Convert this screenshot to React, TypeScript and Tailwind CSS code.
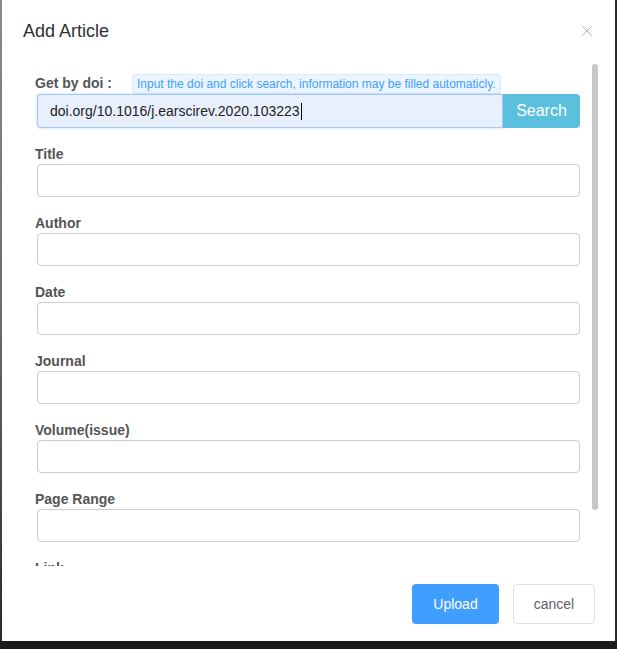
import { X } from 'lucide-react';

const fields = ['Title', 'Author', 'Date', 'Journal', 'Volume(issue)', 'Page Range', 'Link'];

export default function App() {
  return (
    <div className="h-[649px] w-[617px] bg-[#1b1b1b] flex flex-col font-['Liberation_Sans',Arial,sans-serif]">
      <div className="flex h-[641px]">
        {/* backdrop edge */}
        <div className="w-[2px] bg-gradient-to-b from-[#8a8a8a] via-[#6c6c6c] to-[#2a2a2a]" />
        <div className="relative w-[613px] bg-white flex flex-col">
          {/* Header */}
          <div className="h-[62px] flex items-center justify-between pl-[21px] pr-[19px] shrink-0">
            <h3 className="text-[18px] text-[#303133] pt-[1px]">Add Article</h3>
            <X className="w-[18px] h-[18px] text-[#a0a3a8]" strokeWidth={1.1} />
          </div>

          {/* Body */}
          <div className="relative h-[504px] overflow-hidden shrink-0">
            <div className="pl-[33px] pr-[35px] pt-[11px]">
              <div className="flex items-center h-[21px] gap-[20px]">
                <span className="text-[14px] font-bold text-[#555]">Get by doi :</span>
                <span className="h-[20px] px-[4px] flex items-center rounded-[3px] bg-[#ecf5ff] border border-[#d9ecff] text-[12px] text-[#409eff]">
                  Input the doi and click search, information may be filled automaticly.
                </span>
              </div>
              <div className="flex h-[34px] ml-[2px]">
                <div className="flex-1 flex items-center bg-[#e8f0fe] border border-[#a9c6ee] rounded-l-[4px] pl-[12px] shadow-[0_0_3px_rgba(102,175,233,0.5)] text-[14px] text-[#222]">
                  doi.org/10.1016/j.earscirev.2020.103223
                  <span className="w-[1px] h-[17px] bg-black ml-[1px]" />
                </div>
                <button className="w-[77px] bg-[#5bc0de] text-white text-[16px] rounded-r-[4px]">Search</button>
              </div>

              {fields.map((f) => (
                <div key={f} className="mt-[16px]">
                  <label className="block h-[20px] leading-[20px] text-[14px] font-bold text-[#555]">{f}</label>
                  <div className="ml-[2px] h-[33px] border border-[#ccc] rounded-[4px]" />
                </div>
              ))}
            </div>
            {/* scrollbar thumb */}
            <div className="absolute right-[17px] top-[2px] w-[6px] h-[446px] rounded-full bg-[#c8c8c8]" />
          </div>

          {/* Footer */}
          <div className="flex justify-end gap-[14px] pr-[20px] pt-[18px]">
            <button className="w-[87px] h-[40px] rounded-[4px] bg-[#409eff] text-white text-[14px]">Upload</button>
            <button className="w-[82px] h-[40px] rounded-[4px] border border-[#dcdfe6] text-[#606266] text-[14px]">cancel</button>
          </div>
        </div>
        <div className="w-[2px] bg-[#2a2a2a]" />
      </div>
    </div>
  );
}
